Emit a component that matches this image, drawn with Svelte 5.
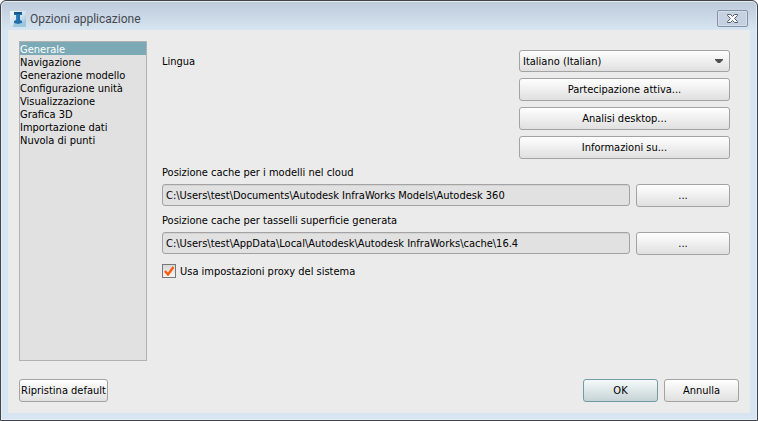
<script>
  const sections = [
    'Generale',
    'Navigazione',
    'Generazione modello',
    'Configurazione unità',
    'Visualizzazione',
    'Grafica 3D',
    'Importazione dati',
    'Nuvola di punti',
  ];

  const actions = ['Partecipazione attiva...', 'Analisi desktop...', 'Informazioni su...'];

  const caches = [
    {
      id: 'cache-cloud',
      label: 'Posizione cache per i modelli nel cloud',
      path: 'C:\\Users\\test\\Documents\\Autodesk InfraWorks Models\\Autodesk 360',
    },
    {
      id: 'cache-tiles',
      label: 'Posizione cache per tasselli superficie generata',
      path: 'C:\\Users\\test\\AppData\\Local\\Autodesk\\Autodesk InfraWorks\\cache\\16.4',
    },
  ];

  let active = $state('Generale');
  let language = $state('it');
  let useProxy = $state(true);
</script>

<div class="window">
  <header class="titlebar">
    <svg class="logo" width="16" height="16" viewBox="0 0 16 16">
      <defs>
        <linearGradient id="logo-bg" x1="0" y1="0" x2="1" y2="1">
          <stop offset="0" stop-color="#f4f8fb" />
          <stop offset="0.5" stop-color="#d3e2ec" />
          <stop offset="1" stop-color="#8db9d3" />
        </linearGradient>
      </defs>
      <rect width="16" height="16" fill="url(#logo-bg)" />
      <path d="M4 12 L11 13 L16 8 V16 H3 Z" fill="#9fc6dc" />
      <path d="M4 1 H12 V4 H10 V9 L12 10 V12 L8 13 L4 12 V10 L6 9 V4 H4 Z" fill="#1f6eae" />
      <path d="M4 1 H12 V2 L10 3 H6 L4 2 Z" fill="#14558f" />
      <path d="M6 4 H8 V9 L6 10 Z" fill="#2d7fbd" />
    </svg>
    <h1>Opzioni applicazione</h1>
    <button class="close" type="button" aria-label="Chiudi">
      <svg width="13" height="11" viewBox="0 0 13 11">
        <path
          d="M1.5 1.5 H4.5 L6.5 3.5 L8.5 1.5 H11.5 V2.5 L8.5 5.5 L11.5 8.5 V9.5 H8.5 L6.5 7.5 L4.5 9.5 H1.5 V8.5 L4.5 5.5 L1.5 2.5 Z"
          fill="#fdfdfe"
          stroke="#535a70"
          stroke-linejoin="round"
        />
      </svg>
    </button>
  </header>

  <form class="content" onsubmit={(e) => e.preventDefault()}>
    <div class="body">
      <ul class="sections">
        {#each sections as section}
          <li>
            <button
              type="button"
              class="section"
              class:section--active={section === active}
              onclick={() => (active = section)}
            >
              {section}
            </button>
          </li>
        {/each}
      </ul>

      <div class="panel">
        <div class="language">
          <label for="language">Lingua</label>
          <div class="language-controls">
            <div class="select">
              <select id="language" bind:value={language}>
                <option value="it">Italiano (Italian)</option>
              </select>
              <svg class="arrow" width="8" height="4" viewBox="0 0 8 4">
                <path d="M0 0 H8 V1 L5 4 H3 L0 1 Z" fill="#505050" />
              </svg>
            </div>
            {#each actions as action}
              <button type="button" class="button">{action}</button>
            {/each}
          </div>
        </div>

        {#each caches as cache}
          <div class="cache">
            <label for={cache.id}>{cache.label}</label>
            <div class="cache-row">
              <input id={cache.id} type="text" value={cache.path} readonly />
              <button type="button" class="button browse">...</button>
            </div>
          </div>
        {/each}

        <label class="proxy">
          <input type="checkbox" bind:checked={useProxy} />
          <span class="box">
            {#if useProxy}
              <svg width="10" height="10" viewBox="0 0 10 10">
                <path d="M1 5 L4 8.5 L9.5 1" fill="none" stroke="#ff5a0a" stroke-width="2.4" />
              </svg>
            {/if}
          </span>
          Usa impostazioni proxy del sistema
        </label>
      </div>
    </div>

    <footer class="footer">
      <button type="button" class="button reset">Ripristina default</button>
      <button type="submit" class="button action button--default">OK</button>
      <button type="button" class="button action">Annulla</button>
    </footer>
  </form>
</div>

<style>
  :global(body) {
    background: #fff;
  }

  .window {
    box-sizing: border-box;
    min-height: 100vh;
    display: flex;
    flex-direction: column;
    padding: 0 7px 7px;
    border: 1px solid #454347;
    border-radius: 6px 6px 0 0;
    background: linear-gradient(#bccada, #d7e4f1 29px);
    box-shadow: inset 0 0 0 1px #e3edf6;
    font-family: 'DejaVu Sans Condensed', Tahoma, sans-serif;
    font-size: 11px;
    line-height: 13px;
    color: #000;
  }

  button,
  input,
  select {
    box-sizing: border-box;
    margin: 0;
    font: inherit;
    color: inherit;
  }

  .titlebar {
    display: flex;
    align-items: center;
    gap: 4px;
    height: 29px;
    padding: 6px 2px 0;
    box-sizing: border-box;
  }

  h1 {
    flex: 1;
    margin: 0;
    font-family: Roboto, 'Segoe UI', sans-serif;
    font-size: 12px;
    font-weight: 400;
    line-height: 16px;
    color: #44484e;
  }

  .close {
    display: flex;
    align-items: center;
    justify-content: center;
    width: 31px;
    height: 17px;
    padding: 0;
    border: 1px solid #8391a9;
    border-radius: 2px;
    background: linear-gradient(#c6d2e0, #c3d0df);
    box-shadow: inset 0 0 0 1px #d5dfea;
  }

  .content {
    flex: 1;
    display: flex;
    flex-direction: column;
    gap: 18px;
    padding: 11px;
    background: #ebebeb;
  }

  .body {
    flex: 1;
    display: flex;
    gap: 15px;
  }

  .sections {
    box-sizing: border-box;
    width: 128px;
    margin: 0;
    padding: 0;
    border: 1px solid #b1b1b1;
    background: #e1e1e1;
    list-style: none;
  }

  .section {
    display: block;
    width: 100%;
    height: 13px;
    padding: 1px 0 0;
    border: 0;
    background: none;
    text-align: left;
    white-space: nowrap;
  }

  .section--active {
    background: #7baab6;
    color: #fff;
  }

  .panel {
    flex: 1;
    display: flex;
    flex-direction: column;
    padding: 9px 9px 0 0;
  }

  .language {
    display: flex;
    justify-content: space-between;
    margin-bottom: 7px;
  }

  .language label {
    line-height: 24px;
  }

  .language-controls {
    display: flex;
    flex-direction: column;
    gap: 6px;
    width: 211px;
  }

  .select {
    position: relative;
    display: flex;
  }

  select {
    appearance: none;
    width: 100%;
    height: 22px;
    padding: 0 20px 0 3px;
    border: 1px solid #a3a3a3;
    border-radius: 3px;
    background: linear-gradient(#fdfdfd, #e0e0e0);
  }

  .arrow {
    position: absolute;
    top: 9px;
    right: 7px;
    pointer-events: none;
  }

  .button {
    height: 23px;
    padding: 0 1px;
    border: 1px solid #a3a3a3;
    border-radius: 3px;
    background: linear-gradient(#fefefe, #e0e0e0);
    white-space: nowrap;
  }

  .button--default {
    border-color: #739ba5;
    background: linear-gradient(#f4fafa, #c6d3d5);
  }

  .cache {
    display: flex;
    flex-direction: column;
    gap: 5px;
    margin-bottom: 7px;
  }

  .cache-row {
    display: flex;
    align-items: flex-start;
    gap: 6px;
  }

  input[type='text'] {
    flex: 1;
    min-width: 0;
    height: 22px;
    padding: 0 3px;
    border: 1px solid #a3a3a3;
    border-radius: 3px;
    background: #e1e1e1;
    box-shadow: inset 0 1px #d3d3d3;
  }

  .browse {
    width: 94px;
  }

  .proxy {
    position: relative;
    display: flex;
    align-items: center;
    align-self: flex-start;
    gap: 4px;
    margin-top: 2px;
  }

  .proxy input {
    position: absolute;
    opacity: 0;
  }

  .box {
    box-sizing: border-box;
    display: flex;
    align-items: center;
    justify-content: center;
    width: 14px;
    height: 14px;
    border: 1px solid #777;
    background: linear-gradient(#d8d8d8, #f4f4f4);
  }

  .footer {
    display: flex;
    gap: 6px;
  }

  .reset {
    width: 89px;
    margin-right: auto;
  }

  .action {
    width: 75px;
  }
</style>
